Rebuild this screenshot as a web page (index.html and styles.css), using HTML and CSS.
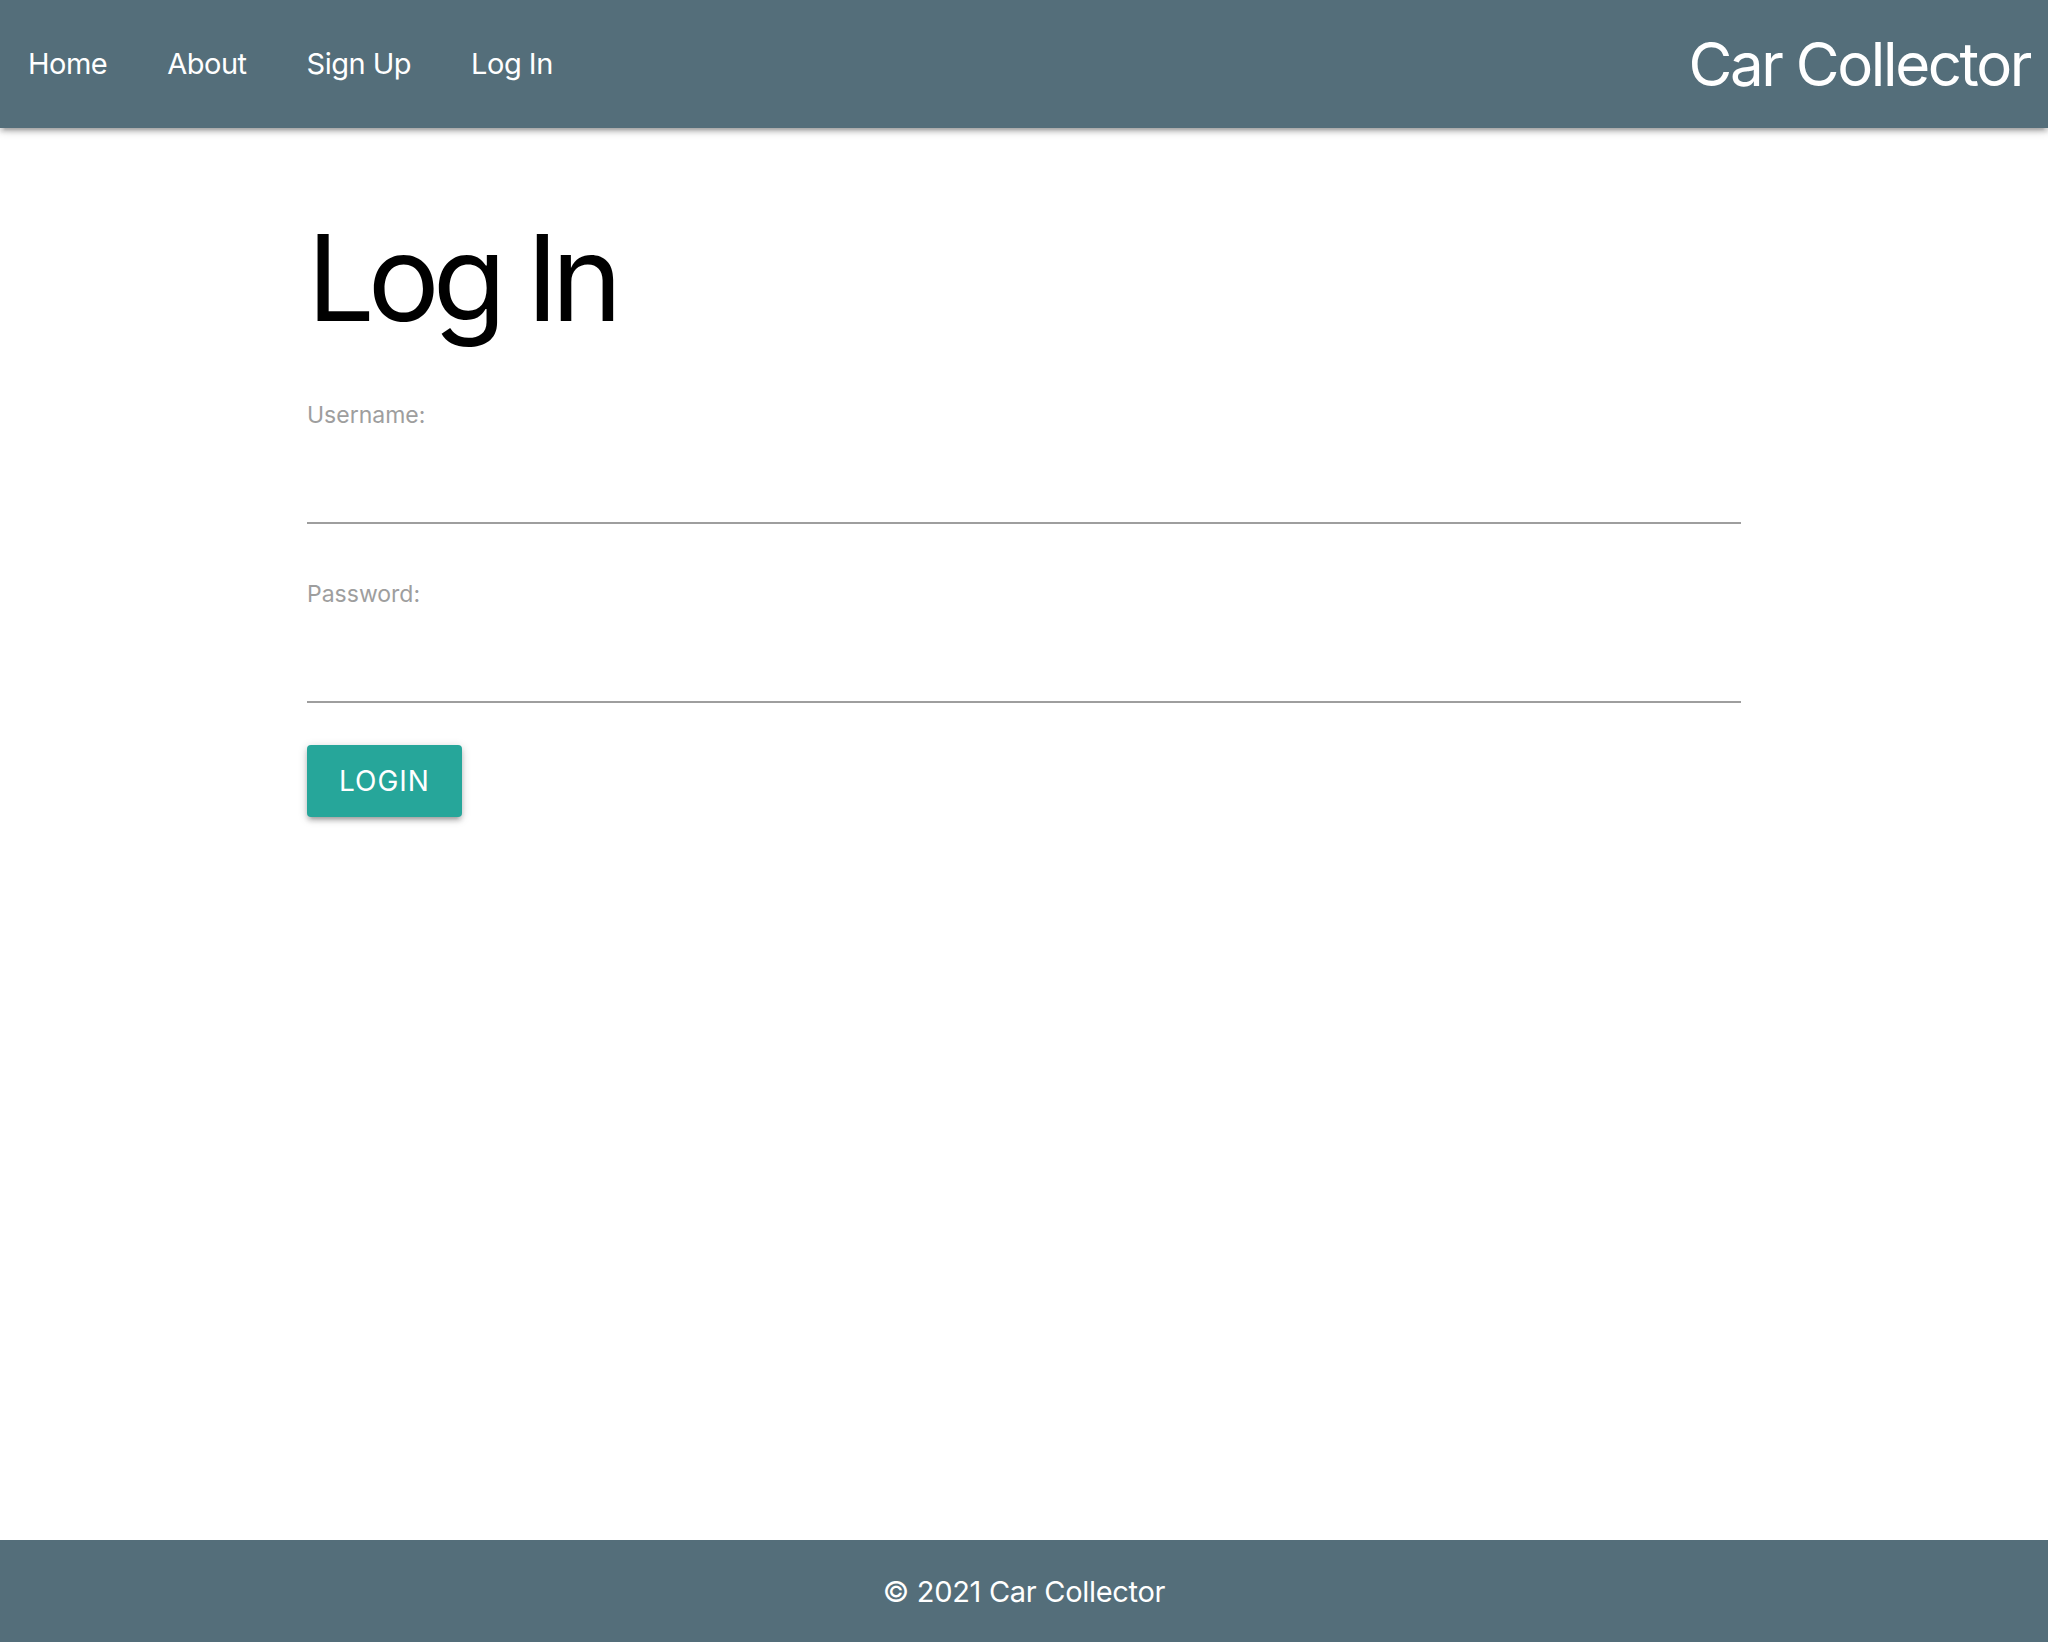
FILE: index.html
```html
<!DOCTYPE html>
<html lang="en">
<head>
<meta charset="utf-8">
<title>Car Collector</title>
<link rel="stylesheet" href="styles.css">
</head>
<body>
<header class="topnav">
  <ul class="nav-links">
    <li><a href="#">Home</a></li>
    <li><a href="#">About</a></li>
    <li><a href="#">Sign Up</a></li>
    <li><a href="#">Log In</a></li>
  </ul>
  <a href="#" class="brand-logo">Car Collector</a>
</header>
<main class="container">
  <h1 class="page-title">Log In</h1>
  <form class="login-form">
    <p class="field">
      <label class="field-label" for="id_username">Username:</label>
      <input class="field-input" type="text" id="id_username">
    </p>
    <p class="field">
      <label class="field-label" for="id_password">Password:</label>
      <input class="field-input" type="password" id="id_password">
    </p>
    <button type="button" class="btn">Login</button>
  </form>
</main>
<footer class="page-footer">
  <span>© 2021 Car Collector</span>
</footer>
</body>
</html>
```

FILE: styles.css
```css
html, body {
  margin: 0;
  padding: 0;
}
body {
  min-height: 100vh;
  display: flex;
  flex-direction: column;
  font-family: Inter, "Noto Sans", "Liberation Sans", sans-serif;
  color: rgba(0,0,0,0.87);
  background: #fff;
}
.topnav {
  height: 128px;
  background: #546e7a;
  display: flex;
  align-items: center;
  justify-content: space-between;
  box-shadow: 0 4px 4px 0 rgba(0,0,0,0.14), 0 6px 2px -4px rgba(0,0,0,0.12), 0 2px 10px 0 rgba(0,0,0,0.2);
  position: relative;
  z-index: 1;
}
.nav-links {
  list-style: none;
  margin: 0;
  padding: 0;
  display: flex;
}
.nav-links a {
  display: block;
  padding: 0 30px;
  line-height: 128px;
  color: #fff;
  text-decoration: none;
  font-size: 29px;
  letter-spacing: -0.5px;
}
.nav-links li:first-child a { padding-left: 28px; }
.brand-logo {
  color: #fff;
  text-decoration: none;
  font-size: 60px;
  line-height: 128px;
  margin-right: 18px;
  letter-spacing: -2.4px;
}
.container {
  width: 1434px;
  margin: 0 auto;
  flex: 1;
}
.page-title {
  font-size: 120px;
  font-weight: 400;
  line-height: 134px;
  margin: 83px 0 49px;
  color: #000;
  letter-spacing: -7px;
}
.login-form {
  display: flex;
  flex-direction: column;
  align-items: flex-start;
}
.field {
  margin: 0 0 49px;
  width: 100%;
}
.field-label {
  display: block;
  font-size: 23px;
  line-height: 43px;
  color: #9e9e9e;
}
.field-input {
  display: block;
  width: 100%;
  box-sizing: content-box;
  height: 85px;
  border: none;
  border-bottom: 2px solid #9e9e9e;
  padding: 0;
  margin: 0;
  outline: none;
  background: transparent;
  font-size: 29px;
}
.btn {
  height: 72px;
  padding: 0 32px;
  border: none;
  border-radius: 4px;
  background: #26a69a;
  color: #fff;
  font-family: inherit;
  font-size: 28px;
  letter-spacing: 1px;
  text-transform: uppercase;
  box-shadow: 0 4px 4px 0 rgba(0,0,0,0.14), 0 6px 2px -4px rgba(0,0,0,0.12), 0 2px 10px 0 rgba(0,0,0,0.2);
  cursor: pointer;
  margin-top: -7px;
}
.page-footer {
  height: 102px;
  background: #546e7a;
  color: #fff;
  display: flex;
  align-items: center;
  justify-content: center;
  font-size: 29px;
  letter-spacing: -0.3px;
}
```
